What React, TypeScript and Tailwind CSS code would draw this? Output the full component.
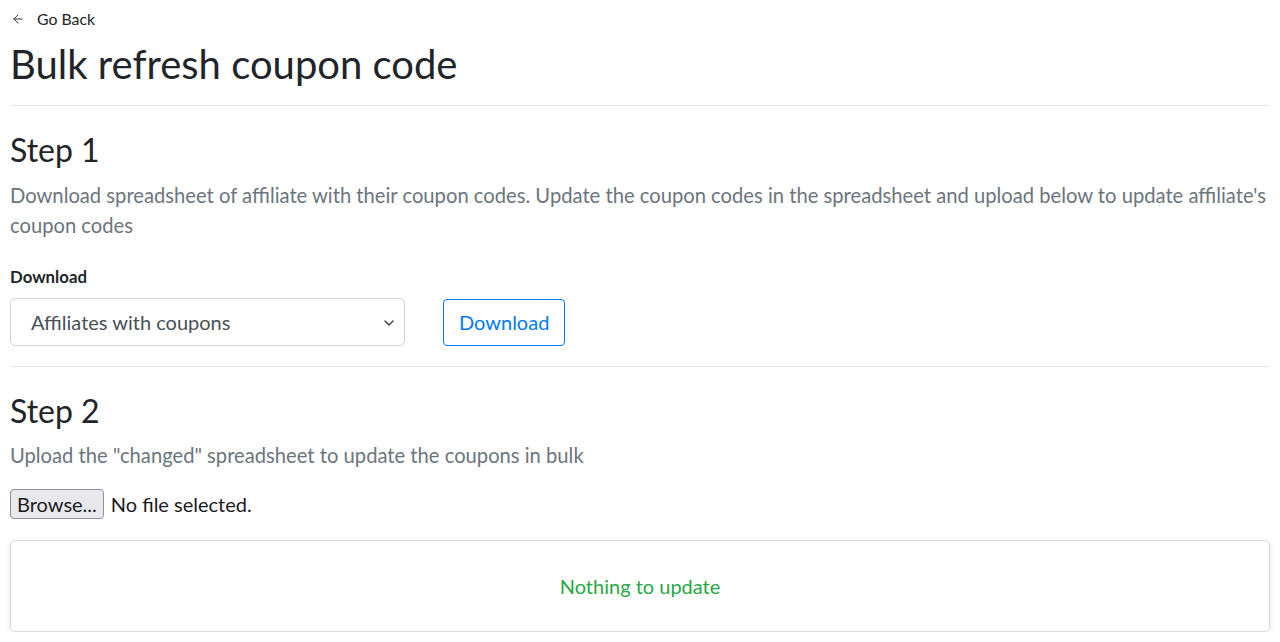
import { ArrowLeft, ChevronDown } from 'lucide-react'

export default function App() {
  return (
    <div className="px-[10px] font-['Lato','Noto_Sans',sans-serif] text-[#212529]">
      <a href="#" className="flex items-center gap-[12px] pt-[8px] text-[15.8px] leading-[21px] text-[#212529]">
        <ArrowLeft className="w-[14px] h-[14px] ml-[1px]" strokeWidth={1.6} />
        <span>Go Back</span>
      </a>
      <h1 className="mt-[11px] text-[40px] leading-[48px] font-normal">Bulk refresh coupon code</h1>
      <hr className="mt-[17px] border-0 border-t border-[#e5e5e5]" />

      <section className="pt-[25px]">
        <h2 className="text-[32px] leading-[38px] font-normal">Step 1</h2>
        <p className="mt-[11px] text-[20.2px] leading-[30px] text-[#6c757d]">
          Download spreadsheet of affiliate with their coupon codes. Update the coupon codes in the spreadsheet and upload below to update affiliate's coupon codes
        </p>
        <label className="block mt-[26px] text-[16.8px] leading-[22px] font-bold">Download</label>
        <div className="flex items-center gap-[38px] mt-[10px]">
          <div className="relative w-[395px] h-[48px] rounded-[5px] border border-[#ced4da] bg-white flex items-center pl-[20px] text-[20px] text-[#495057]">
            Affiliates with coupons
            <ChevronDown className="absolute right-[7px] top-[16px] w-[16px] h-[16px] text-[#343a40]" strokeWidth={2} />
          </div>
          <button className="h-[47px] px-[15px] rounded-[4px] border border-[#007bff] text-[#007bff] text-[20px] bg-white">
            Download
          </button>
        </div>
      </section>
      <hr className="mt-[20px] border-0 border-t border-[#e5e5e5]" />

      <section className="pt-[25px]">
        <h2 className="text-[32px] leading-[38px] font-normal">Step 2</h2>
        <p className="mt-[10px] text-[20.2px] leading-[30px] text-[#6c757d]">
          Upload the "changed" spreadsheet to update the coupons in bulk
        </p>
        <div className="flex items-center gap-[7px] mt-[19px] text-[20px] text-[#1c1b22]">
          <button className="h-[30px] px-[6px] rounded-[4px] border border-[#8f8f9d] bg-[#e9e9ed] text-[20px] leading-[24px]">
            Browse...
          </button>
          <span>No file selected.</span>
        </div>
        <div className="mt-[21px] h-[92px] rounded-[5px] border border-[#dcdcdc] shadow-[0_2px_6px_rgba(0,0,0,0.1)] flex items-center justify-center">
          <span className="text-[20px] text-[#28a745]">Nothing to update</span>
        </div>
      </section>
    </div>
  )
}
